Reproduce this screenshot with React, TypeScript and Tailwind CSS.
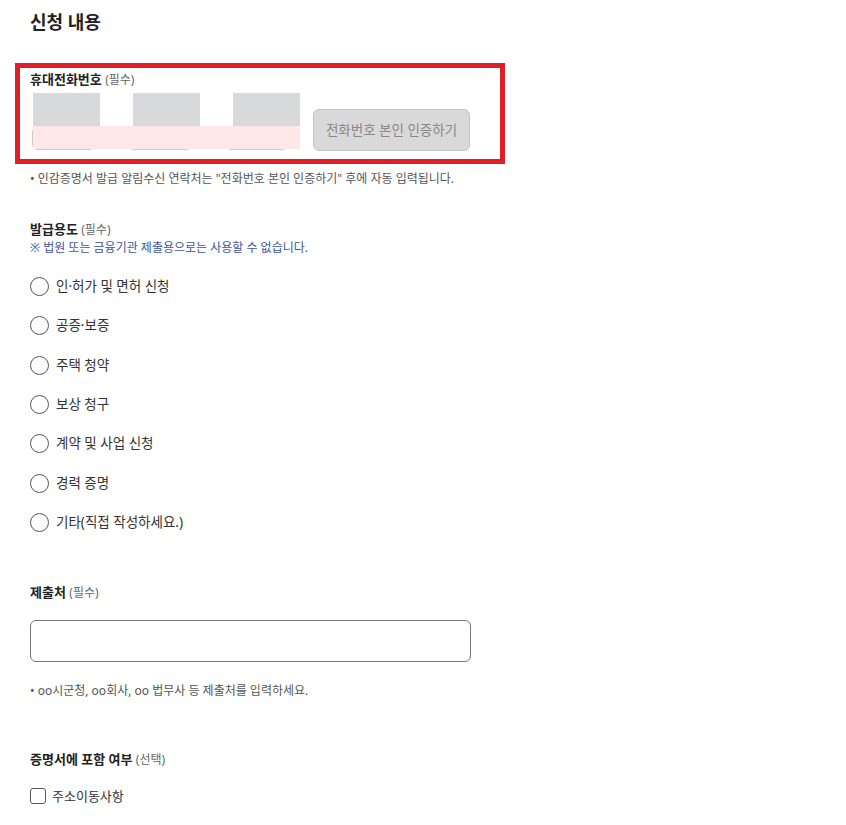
import { useState } from 'react';

const purposes = [
  '인·허가 및 면허 신청',
  '공증·보증',
  '주택 청약',
  '보상 청구',
  '계약 및 사업 신청',
  '경력 증명',
  '기타(직접 작성하세요.)',
];

function FieldLabel({ title, tag }: { title: string; tag: string }) {
  return (
    <p className="text-[13px] leading-[18px] text-[#222]">
      <span className="font-bold">{title}</span>{' '}
      <span className="text-[12px] text-[#666]">{tag}</span>
    </p>
  );
}

export default function App() {
  const [purpose, setPurpose] = useState<string | null>(null);
  const [withAddress, setWithAddress] = useState(false);

  return (
    <div
      className="min-h-screen bg-white pl-[30px] pt-[9px] pb-[20px] text-[#333]"
      style={{ fontFamily: '"Noto Sans", "Noto Sans CJK KR", sans-serif' }}
    >
      <h2 className="text-[18px] leading-[26px] font-bold text-[#222]">신청 내용</h2>

      {/* phone number, highlighted */}
      <div className="-ml-[15px] mt-[28px] w-[490px] border-[5px] border-[#e01e25] pl-[10px] pt-[2px] pb-[8px]">
        <FieldLabel title="휴대전화번호" tag="(필수)" />
        <div className="relative mt-[4px] flex h-[58px] items-end">
          <div className="mb-[1px] ml-[2px] flex gap-[33px]">
            <input className="h-[24px] w-[63px] rounded-[6px] border border-[#c9c9c9]" />
            <input className="h-[24px] w-[64px] rounded-[6px] border border-[#c9c9c9]" />
            <input className="h-[24px] w-[63px] rounded-[6px] border border-[#c9c9c9]" />
          </div>
          <button
            disabled
            className="ml-[25px] h-[42px] w-[157px] rounded-[6px] border border-[#c4c4c4] bg-[#d9d9d9] text-[13.5px] text-[#888]"
          >
            전화번호 본인 인증하기
          </button>
          <div className="absolute left-[3px] top-0 h-[33px] w-[67px] bg-[#d8d9da]" />
          <div className="absolute left-[103px] top-0 h-[33px] w-[67px] bg-[#d8d9da]" />
          <div className="absolute left-[203px] top-0 h-[33px] w-[67px] bg-[#d8d9da]" />
          <div className="absolute left-[3px] top-[33px] h-[23px] w-[267px] bg-[#fde8e7]" />
        </div>
      </div>
      <p className="mt-[6px] text-[12px] leading-[18px] text-[#555]">
        • 인감증명서 발급 알림수신 연락처는 "전화번호 본인 인증하기" 후에 자동 입력됩니다.
      </p>

      {/* purpose */}
      <div className="mt-[32px]">
        <FieldLabel title="발급용도" tag="(필수)" />
        <p className="text-[12px] leading-[18px] text-[#3d55a3]">※ 법원 또는 금융기관 제출용으로는 사용할 수 없습니다.</p>
      </div>
      <div className="mt-[20px] flex flex-col">
        {purposes.map((p) => (
          <label key={p} className="flex h-[39.33px] cursor-pointer items-start gap-[7px]">
            <span
              onClick={() => setPurpose(p)}
              className="flex h-[19px] w-[19px] shrink-0 items-center justify-center rounded-full border-[1.5px] border-[#555] bg-white"
            >
              {purpose === p && <span className="h-[9px] w-[9px] rounded-full bg-[#333]" />}
            </span>
            <span className="text-[13.5px] leading-[19px] text-[#333]">{p}</span>
          </label>
        ))}
      </div>

      {/* destination */}
      <div className="mt-[31px]">
        <FieldLabel title="제출처" tag="(필수)" />
      </div>
      <input className="mt-[18px] h-[42px] w-[441px] rounded-[6px] border border-[#777] px-3 text-[14px] outline-none" />
      <p className="mt-[20px] text-[12px] leading-[18px] text-[#555]">• oo시군청, oo회사, oo 법무사 등 제출처를 입력하세요.</p>

      {/* include on certificate */}
      <div className="mt-[50px]">
        <FieldLabel title="증명서에 포함 여부" tag="(선택)" />
      </div>
      <label className="mt-[19px] flex cursor-pointer items-center gap-[6px]">
        <span
          onClick={() => setWithAddress(!withAddress)}
          className="flex h-[16px] w-[16px] items-center justify-center rounded-[3px] border-[1.5px] border-[#555] text-[11px] leading-none"
        >
          {withAddress ? '✓' : ''}
        </span>
        <span className="text-[13px] leading-[16px] text-[#333]">주소이동사항</span>
      </label>
    </div>
  );
}
